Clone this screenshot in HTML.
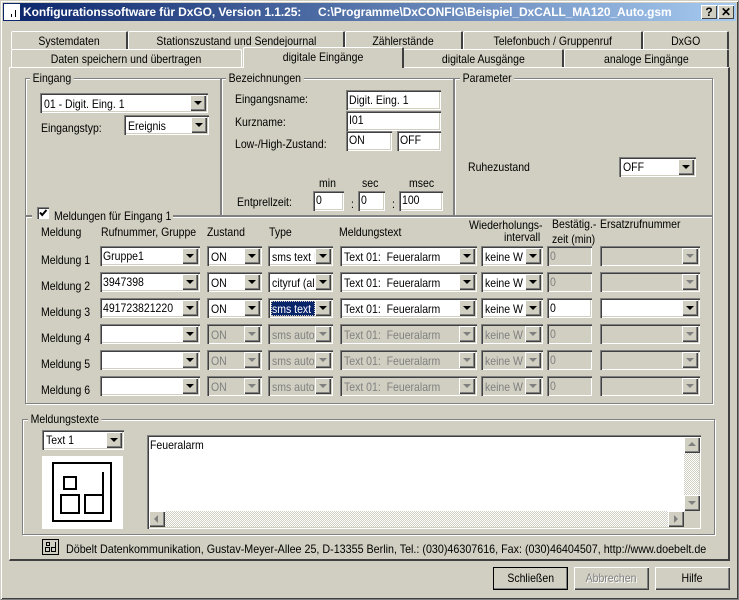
<!DOCTYPE html>
<html><head><meta charset="utf-8">
<style>
html,body{margin:0;padding:0;width:739px;height:600px;overflow:hidden;background:#d1cfc1;font-family:"Liberation Sans",sans-serif;font-size:12px;color:#000}
div,span{position:absolute;box-sizing:border-box;white-space:nowrap}
.win{left:0;top:0;width:739px;height:600px;border:1px solid #808080;border-top-color:#d1cfc1;border-left-color:#d1cfc1;box-shadow:inset 1px 1px #fff,inset -1px -1px #404040}
.title{left:3px;top:3px;width:733px;height:18px;background:linear-gradient(90deg,#0a246a,#a6caf0)}
.tt{color:#fff;font-weight:bold;font-size:12px;top:5px;line-height:15px}
.tb{top:5px;width:16px;height:14px;background:#d1cfc1;box-shadow:inset 1px 1px #fff,inset -1px -1px #404040;font-weight:bold;font-size:12px;text-align:center;line-height:14px}
.tab{background:#d1cfc1;border-top:1px solid #fff;border-left:1px solid #fff;border-right:2px solid #404040;border-radius:2px 2px 0 0;text-align:center;line-height:19px;font-size:12px}
.c{position:static;display:inline-block;transform:scaleX(.875)}
.panel{left:9px;top:67px;width:721px;height:494px;background:#d1cfc1;border-top:1px solid #fff;border-left:1px solid #fff;border-right:2px solid #404040;border-bottom:2px solid #404040}
.g{border:1px solid #808080;box-shadow:1px 1px #fff,inset 1px 1px #fff}
.l{line-height:14px;font-size:12px;transform:scaleX(.875);transform-origin:0 0}
.lg{line-height:14px;font-size:12px;background:#d1cfc1;padding:0 3px;transform:scaleX(.875);transform-origin:0 0}
.s{background:#fff;box-shadow:inset 1px 1px #808080,inset 2px 2px #404040,inset -1px -1px #fff,inset -2px -2px #d1cfc1;overflow:hidden;height:20px;font-size:12px}
.t{left:4px;top:2px;line-height:16px;transform:scaleX(.875);transform-origin:0 0}
.e{left:3px}
.h{top:3px}
.d{background:#d1cfc1;color:#808080}
.b{right:2px;top:2px;width:16px;bottom:2px;background:#d1cfc1;box-shadow:inset 1px 1px #fff,inset -1px -1px #404040,inset -2px -2px #808080}
.b:after{content:"";position:absolute;left:4px;top:6px;border:4px solid transparent;border-top:4px solid #000;border-bottom:0}
.d .b:after{border-top-color:#808080}
.btn{top:567px;width:75px;height:23px;background:#d1cfc1;box-shadow:inset 1px 1px #fff,inset -1px -1px #404040,inset -2px -2px #808080;text-align:center;line-height:22px;font-size:12px}
.hatch{background-color:#e8e6dd;background-image:repeating-conic-gradient(#d1cfc1 0 25%,#fff 0 50%);background-size:2px 2px}
.sb{background:#d1cfc1;box-shadow:inset 1px 1px #fff,inset -1px -1px #404040,inset -2px -2px #808080;width:16px;height:16px}
</style></head><body>
<div class="win"></div>
<div class="title"></div>
<div style="left:4px;top:4px;width:16px;height:16px;background:#fff"></div>
<div style="left:11px;top:14px;width:1px;height:3px;background:#000"></div>
<div style="left:15px;top:10px;width:1px;height:7px;background:#000"></div>
<div class="tt" style="left:23px;letter-spacing:-.08px">Konfigurationssoftware für DxGO, Version 1.1.25:</div>
<div class="tt" style="left:318px;letter-spacing:-.1px">C:\Programme\DxCONFIG\Beispiel_DxCALL_MA120_Auto.gsm</div>
<div class="tb" style="left:701px;width:16px">?</div>
<div class="tb" style="left:718px;width:16px">✕</div>

<div class="tab" style="left:11px;top:31px;width:117px;height:18px"><span class="c">Systemdaten</span></div>
<div class="tab" style="left:128px;top:31px;width:217px;height:18px"><span class="c">Stationszustand und Sendejournal</span></div>
<div class="tab" style="left:345px;top:31px;width:118px;height:18px"><span class="c">Zählerstände</span></div>
<div class="tab" style="left:463px;top:31px;width:180px;height:18px"><span class="c">Telefonbuch / Gruppenruf</span></div>
<div class="tab" style="left:643px;top:31px;width:86px;height:18px"><span class="c">DxGO</span></div>
<div class="panel"></div>
<div class="tab" style="left:11px;top:49px;width:231px;height:18px;border-right:1px solid #fff"><span class="c">Daten speichern und übertragen</span></div>
<div class="tab" style="left:403px;top:49px;width:161px;height:18px"><span class="c">digitale Ausgänge</span></div>
<div class="tab" style="left:564px;top:49px;width:165px;height:18px"><span class="c">analoge Eingänge</span></div>
<div class="tab" style="left:243px;top:47px;width:161px;height:21px;line-height:19px;border-bottom:0"><span class="c">digitale Eingänge</span></div>

<div class="g" style="left:25px;top:78px;width:196px;height:138px"></div>
<div class="g" style="left:221px;top:78px;width:233px;height:138px"></div>
<div class="g" style="left:454px;top:78px;width:259px;height:138px"></div>
<div class="g" style="left:25px;top:216px;width:688px;height:188px"></div>
<div class="g" style="left:22px;top:419px;width:693px;height:116px"></div>
<div class="lg" style="left:30px;top:71px">Eingang</div>
<div class="lg" style="left:226px;top:71px">Bezeichnungen</div>
<div class="lg" style="left:460px;top:71px">Parameter</div>
<div class="lg" style="left:28px;top:412px">Meldungstexte</div>

<div class="s" style="left:40px;top:93px;width:168px"><span class="t h">01 - Digit. Eing. 1</span><div class="b"></div></div>
<div class="l" style="left:41px;top:121px">Eingangstyp:</div>
<div class="s" style="left:124px;top:115px;width:85px"><span class="t h">Ereignis</span><div class="b"></div></div>

<div class="l" style="left:235px;top:92px">Eingangsname:</div>
<div class="l" style="left:235px;top:115px">Kurzname:</div>
<div class="l" style="left:235px;top:137px">Low-/High-Zustand:</div>
<div class="s" style="left:346px;top:90px;width:95px"><span class="t e">Digit. Eing. 1</span></div>
<div class="s" style="left:346px;top:111px;width:95px"><span class="t e" style="top:1px">I01</span></div>
<div class="s" style="left:346px;top:131px;width:46px"><span class="t e" style="top:1px">ON</span></div>
<div class="s" style="left:397px;top:131px;width:44px"><span class="t e" style="top:1px">OFF</span></div>
<div class="l" style="left:319px;top:176px">min</div>
<div class="l" style="left:362px;top:176px">sec</div>
<div class="l" style="left:409px;top:176px">msec</div>
<div class="l" style="left:237px;top:195px">Entprellzeit:</div>
<div class="s" style="left:313px;top:191px;width:31px"><span class="t e" style="top:1px">0</span></div>
<div class="l" style="left:351px;top:197px">:</div>
<div class="s" style="left:358px;top:191px;width:27px"><span class="t e" style="top:1px">0</span></div>
<div class="l" style="left:392px;top:197px">:</div>
<div class="s" style="left:399px;top:191px;width:44px"><span class="t e" style="top:1px">100</span></div>

<div class="l" style="left:468px;top:160px">Ruhezustand</div>
<div class="s" style="left:619px;top:157px;width:77px"><span class="t">OFF</span><div class="b"></div></div>

<!-- Meldungen header -->
<div style="left:32px;top:207px;width:141px;height:16px;background:#d1cfc1"></div>
<div style="left:37px;top:207px;width:12px;height:12px;background:#fff;box-shadow:inset 1px 1px #808080,inset 2px 2px #404040,inset -1px -1px #fff"></div>
<svg style="position:absolute;left:37px;top:207px" width="12" height="12" fill="none" stroke="#000" stroke-width="2"><path d="M3 5.5L5.2 8L9.5 3"/></svg>
<div class="l" style="left:54px;top:209px">Meldungen für Eingang 1</div>
<div class="l" style="left:41px;top:225px">Meldung</div>
<div class="l" style="left:101px;top:225px">Rufnummer, Gruppe</div>
<div class="l" style="left:207px;top:225px">Zustand</div>
<div class="l" style="left:269px;top:225px">Type</div>
<div class="l" style="left:339px;top:225px">Meldungstext</div>
<div class="l" style="left:469px;top:218px">Wiederholungs-</div>
<div class="l" style="left:504px;top:230px">intervall</div>
<div class="l" style="left:552px;top:217px">Bestätig.-</div>
<div class="l" style="left:552px;top:232px">zeit (min)</div>
<div class="l" style="left:600px;top:217px">Ersatzrufnummer</div>

<div class="l" style="left:41px;top:253px">Meldung 1</div>
<div class="l" style="left:41px;top:279px">Meldung 2</div>
<div class="l" style="left:41px;top:305px">Meldung 3</div>
<div class="l" style="left:41px;top:331px">Meldung 4</div>
<div class="l" style="left:41px;top:357px">Meldung 5</div>
<div class="l" style="left:41px;top:383px">Meldung 6</div>

<!-- row 1 -->
<div class="s" style="left:100px;top:246px;width:100px"><span class="t e">Gruppe1</span><div class="b"></div></div>
<div class="s" style="left:207px;top:246px;width:55px"><span class="t h">ON</span><div class="b"></div></div>
<div class="s" style="left:268px;top:246px;width:65px"><span class="t h">sms text |</span><div class="b"></div></div>
<div class="s" style="left:340px;top:246px;width:137px"><span class="t h">Text 01:&nbsp; Feueralarm</span><div class="b"></div></div>
<div class="s" style="left:481px;top:246px;width:62px"><span class="t h">keine W</span><div class="b"></div></div>
<div class="s d" style="left:547px;top:246px;width:45px"><span class="t e">0</span></div>
<div class="s d" style="left:600px;top:246px;width:100px"><div class="b"></div></div>
<!-- row 2 -->
<div class="s" style="left:100px;top:272px;width:100px"><span class="t e">3947398</span><div class="b"></div></div>
<div class="s" style="left:207px;top:272px;width:55px"><span class="t h">ON</span><div class="b"></div></div>
<div class="s" style="left:268px;top:272px;width:65px"><span class="t h">cityruf (al</span><div class="b"></div></div>
<div class="s" style="left:340px;top:272px;width:137px"><span class="t h">Text 01:&nbsp; Feueralarm</span><div class="b"></div></div>
<div class="s" style="left:481px;top:272px;width:62px"><span class="t h">keine W</span><div class="b"></div></div>
<div class="s d" style="left:547px;top:272px;width:45px"><span class="t e">0</span></div>
<div class="s d" style="left:600px;top:272px;width:100px"><div class="b"></div></div>
<!-- row 3 -->
<div class="s" style="left:100px;top:298px;width:100px"><span class="t e">491723821220</span><div class="b"></div></div>
<div class="s" style="left:207px;top:298px;width:55px"><span class="t h">ON</span><div class="b"></div></div>
<div class="s" style="left:268px;top:298px;width:65px"><div style="left:3px;top:3px;width:44px;height:15px;background:#0a246a;outline:1px dotted #d1cfc1;outline-offset:-1px"></div><span class="t h" style="color:#fff">sms text</span><div class="b"></div></div>
<div class="s" style="left:340px;top:298px;width:137px"><span class="t h">Text 01:&nbsp; Feueralarm</span><div class="b"></div></div>
<div class="s" style="left:481px;top:298px;width:62px"><span class="t h">keine W</span><div class="b"></div></div>
<div class="s" style="left:547px;top:298px;width:45px"><span class="t e">0</span></div>
<div class="s" style="left:600px;top:298px;width:100px"><div class="b"></div></div>
<!-- row 4 -->
<div class="s" style="left:100px;top:324px;width:100px"><div class="b"></div></div>
<div class="s d" style="left:207px;top:324px;width:55px"><span class="t h">ON</span><div class="b"></div></div>
<div class="s d" style="left:268px;top:324px;width:65px"><span class="t h">sms auto</span><div class="b"></div></div>
<div class="s d" style="left:340px;top:324px;width:137px"><span class="t h">Text 01:&nbsp; Feueralarm</span><div class="b"></div></div>
<div class="s d" style="left:481px;top:324px;width:62px"><span class="t h">keine W</span><div class="b"></div></div>
<div class="s d" style="left:547px;top:324px;width:45px"><span class="t e">0</span></div>
<div class="s d" style="left:600px;top:324px;width:100px"><div class="b"></div></div>
<!-- row 5 -->
<div class="s" style="left:100px;top:350px;width:100px"><div class="b"></div></div>
<div class="s d" style="left:207px;top:350px;width:55px"><span class="t h">ON</span><div class="b"></div></div>
<div class="s d" style="left:268px;top:350px;width:65px"><span class="t h">sms auto</span><div class="b"></div></div>
<div class="s d" style="left:340px;top:350px;width:137px"><span class="t h">Text 01:&nbsp; Feueralarm</span><div class="b"></div></div>
<div class="s d" style="left:481px;top:350px;width:62px"><span class="t h">keine W</span><div class="b"></div></div>
<div class="s d" style="left:547px;top:350px;width:45px"><span class="t e">0</span></div>
<div class="s d" style="left:600px;top:350px;width:100px"><div class="b"></div></div>
<!-- row 6 -->
<div class="s" style="left:100px;top:376px;width:100px"><div class="b"></div></div>
<div class="s d" style="left:207px;top:376px;width:55px"><span class="t h">ON</span><div class="b"></div></div>
<div class="s d" style="left:268px;top:376px;width:65px"><span class="t h">sms auto</span><div class="b"></div></div>
<div class="s d" style="left:340px;top:376px;width:137px"><span class="t h">Text 01:&nbsp; Feueralarm</span><div class="b"></div></div>
<div class="s d" style="left:481px;top:376px;width:62px"><span class="t h">keine W</span><div class="b"></div></div>
<div class="s d" style="left:547px;top:376px;width:45px"><span class="t e">0</span></div>
<div class="s d" style="left:600px;top:376px;width:100px"><div class="b"></div></div>

<!-- Meldungstexte -->
<div class="s" style="left:42px;top:430px;width:82px"><span class="t">Text 1</span><div class="b"></div></div>
<div style="left:42px;top:456px;width:81px;height:73px;background:#fff"></div>
<svg style="position:absolute;left:42px;top:456px" width="81" height="73" fill="none" stroke="#000" stroke-width="2">
<rect x="11" y="7" width="58" height="58"/>
<rect x="22" y="21" width="12" height="12"/>
<rect x="19" y="39" width="18" height="18"/>
<rect x="43" y="39" width="18" height="18"/>
<path d="M61 16V57"/>
</svg>
<div class="s" style="left:147px;top:435px;width:554px;height:94px"><span class="t e" style="line-height:14px;top:3px">Feueralarm</span></div>
<div class="hatch" style="left:149px;top:511px;width:534px;height:16px"></div>
<div class="hatch" style="left:684px;top:437px;width:15px;height:74px"></div>
<div style="left:683px;top:511px;width:16px;height:16px;background:#d1cfc1"></div>
<div class="sb" style="left:149px;top:511px"><div style="left:5px;top:4px;border:4px solid transparent;border-right:4px solid #808080;border-left:0"></div></div>
<div class="sb" style="left:668px;top:511px"><div style="left:6px;top:4px;border:4px solid transparent;border-left:4px solid #808080;border-right:0"></div></div>
<div class="sb" style="left:684px;top:437px"><div style="left:4px;top:5px;border:4px solid transparent;border-bottom:4px solid #808080;border-top:0"></div></div>
<div class="sb" style="left:684px;top:495px"><div style="left:4px;top:6px;border:4px solid transparent;border-top:4px solid #808080;border-bottom:0"></div></div>

<!-- footer -->
<svg style="position:absolute;left:42px;top:539px" width="18" height="17" fill="none" stroke="#000" stroke-width="1" shape-rendering="crispEdges">
<rect x="0.5" y="0.5" width="16" height="15"/>
<rect x="4.5" y="3.5" width="3" height="3"/>
<rect x="3.5" y="8.5" width="4" height="4"/>
<rect x="9.5" y="8.5" width="4" height="4"/>
<path d="M13.5 3V12.5"/>
</svg>
<div class="l" style="left:66px;top:542px;transform:scaleX(.894)">Döbelt Datenkommunikation, Gustav-Meyer-Allee 25, D-13355 Berlin, Tel.: (030)46307616, Fax: (030)46404507, http://www.doebelt.de</div>

<div class="btn" style="left:493px;outline:1px solid #000;outline-offset:-1px"><span class="c">Schließen</span></div>
<div class="btn" style="left:574px;color:#808080;text-shadow:1px 1px #fff"><span class="c">Abbrechen</span></div>
<div class="btn" style="left:655px"><span class="c">Hilfe</span></div>
</body></html>
